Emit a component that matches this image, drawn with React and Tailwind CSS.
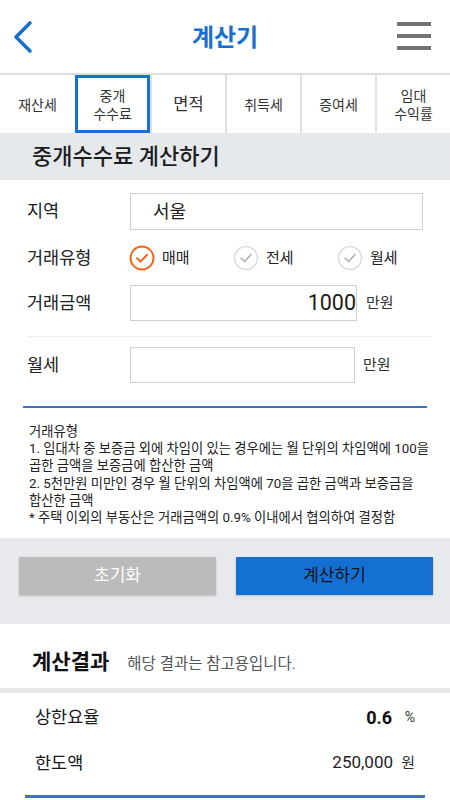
import React, { useState } from 'react';

const tabs = [
  { id: 'asset', label: ['재산세'] },
  { id: 'fee', label: ['중개', '수수료'] },
  { id: 'area', label: ['면적'], big: true },
  { id: 'acq', label: ['취득세'] },
  { id: 'gift', label: ['증여세'] },
  { id: 'rent', label: ['임대', '수익률'] },
];

const dealTypes = ['매매', '전세', '월세'];

const Check = ({ active }) => (
  <svg width="26" height="26" viewBox="0 0 26 26">
    <circle cx="13" cy="13" r="11.5" fill="white" stroke={active ? '#f2661c' : '#dcdcdc'} strokeWidth={active ? 2 : 1.5} />
    <path d="M8 13.3 L11.6 16.6 L18 9.8" fill="none" stroke={active ? '#f2661c' : '#a8a8a8'} strokeWidth={active ? 2 : 1.4} strokeLinecap="round" strokeLinejoin="round" />
  </svg>
);

const App = () => {
  const [tab, setTab] = useState('fee');
  const [deal, setDeal] = useState('매매');

  return (
    <div className="w-[450px] h-[800px] overflow-hidden bg-white text-[#222]" style={{ fontFamily: "Roboto, 'Noto Sans CJK KR', sans-serif" }}>
      {/* header */}
      <div className="h-[73px] flex items-center px-[12px]">
        <div className="w-[60px] flex">
          <svg width="22" height="34" viewBox="0 0 22 34">
            <path d="M18 3 L4 17 L18 31" fill="none" stroke="#1a6fcb" strokeWidth="3.6" strokeLinecap="round" strokeLinejoin="round" />
          </svg>
        </div>
        <h1 className="flex-1 text-center text-[24px] font-bold text-[#1570d0] mt-[2px]">계산기</h1>
        <div className="w-[60px] flex justify-end">
          <div className="w-[34px] flex flex-col gap-[8px] mr-[7px] -mt-[2px]">
            <div className="h-[4px] bg-[#737373]" />
            <div className="h-[4px] bg-[#737373]" />
            <div className="h-[4px] bg-[#737373]" />
          </div>
        </div>
      </div>

      {/* tabs */}
      <div className="h-[60px] flex border-t-2 border-[#dedede] bg-white">
        {tabs.map((t, i) => (
          <button
            key={t.id}
            onClick={() => setTab(t.id)}
            className={`w-[75px] h-full flex flex-col items-center justify-center leading-[18px] text-[#333] pt-[2px] ${
              tab === t.id ? 'border-[3px] border-[#1570d4]' : i > 0 ? 'border-l-2 border-[#e0e0e0]' : ''
            } ${t.big ? 'text-[16.5px]' : 'text-[14px]'}`}
          >
            {t.label.map((l) => (
              <span key={l}>{l}</span>
            ))}
          </button>
        ))}
      </div>

      {/* section title */}
      <div className="h-[47px] bg-[#e6e9ec] flex items-center px-[32px]">
        <h2 className="text-[22px] font-medium text-[#1d1d1d]">중개수수료 계산하기</h2>
      </div>

      {/* form */}
      <div className="px-[27px] pt-[13px]">
        <div className="h-[37px] flex items-center">
          <span className="w-[103px] text-[17.5px]">지역</span>
          <div className="flex-1 h-full border border-[#cfcfcf] flex items-center px-[22px] text-[18px]">서울</div>
        </div>

        <div className="h-[24px] mt-[16px] flex items-center">
          <span className="w-[102px] text-[17.5px]">거래유형</span>
          <div className="flex items-center">
            {dealTypes.map((d, i) => (
              <button key={d} onClick={() => setDeal(d)} className={`flex items-center gap-[7px] ${i < 2 ? 'w-[104px]' : ''}`}>
                <Check active={deal === d} />
                <span className="text-[15px] text-[#222]">{d}</span>
              </button>
            ))}
          </div>
        </div>

        <div className="h-[36px] mt-[15px] flex items-center">
          <span className="w-[103px] text-[17.5px]">거래금액</span>
          <div className="w-[227px] h-full border border-[#cfcfcf] flex items-center justify-end text-[21.5px] text-[#1a1a1a]">1000</div>
          <span className="ml-[9px] text-[15px] text-[#333]">만원</span>
        </div>

        <div className="h-px bg-[#ececec] mt-[15px] -mr-[9px]" />

        <div className="h-[36px] mt-[10px] flex items-center">
          <span className="w-[103px] text-[17.5px]">월세</span>
          <div className="w-[225px] h-full border border-[#cfcfcf]" />
          <span className="ml-[8px] text-[15px] text-[#333]">만원</span>
        </div>
      </div>

      <div className="h-[2px] bg-[#3b72c6] mx-[23px] mt-[23px]" />

      {/* notes */}
      <div className="pl-[29px] pr-[14px] pt-[15px] pb-[10px] text-[13.3px] leading-[17.2px] text-[#222] break-keep">
        <p>거래유형</p>
        <p>1. 임대차 중 보증금 외에 차임이 있는 경우에는 월 단위의 차임액에 100을 곱한 금액을 보증금에 합산한 금액</p>
        <p>2. 5천만원 미만인 경우 월 단위의 차임액에 70을 곱한 금액과 보증금을 합산한 금액</p>
        <p>* 주택 이외의 부동산은 거래금액의 0.9% 이내에서 협의하여 결정함</p>
      </div>

      {/* buttons */}
      <div className="h-[86px] bg-[#e7e9ec] flex items-start justify-between pl-[19px] pr-[17px] pt-[19px] mt-[2px]">
        <button className="w-[197px] h-[38px] bg-[#bbbbbb] text-white text-[17px] shadow-[0_1px_2px_rgba(0,0,0,0.2)]">초기화</button>
        <button className="w-[197px] h-[38px] bg-[#1570d4] text-[#141414] text-[17px] shadow-[0_1px_2px_rgba(0,0,0,0.2)]">계산하기</button>
      </div>

      {/* results */}
      <div className="h-[64px] flex items-center px-[32px] pt-[14px]">
        <h3 className="text-[21px] font-bold text-[#111] mr-[18px]">계산결과</h3>
        <span className="text-[15.5px] text-[#555] pt-[3px]">해당 결과는 참고용입니다.</span>
      </div>
      <div className="h-[5px] bg-[#e6e9ec]" />
      <div className="px-[35px]">
        <div className="h-[46px] flex items-center justify-between mt-[1px]">
          <span className="text-[17.5px] text-[#1a1a1a]">상한요율</span>
          <span className="flex items-center">
            <span className="text-[18px] font-bold text-[#111]">0.6</span>
            <span className="w-[20px] text-right text-[14px] text-[#333] ml-[3px]">%</span>
          </span>
        </div>
        <div className="h-[46px] flex items-center justify-between">
          <span className="text-[17.5px] text-[#1a1a1a]">한도액</span>
          <span className="flex items-center">
            <span className="text-[17px] text-[#222]">250,000</span>
            <span className="w-[22px] text-right text-[15px] text-[#333]">원</span>
          </span>
        </div>
      </div>
      <div className="h-[3px] bg-[#3b72c6] mx-[25px] mt-[9px]" />
    </div>
  );
};

export default App;
